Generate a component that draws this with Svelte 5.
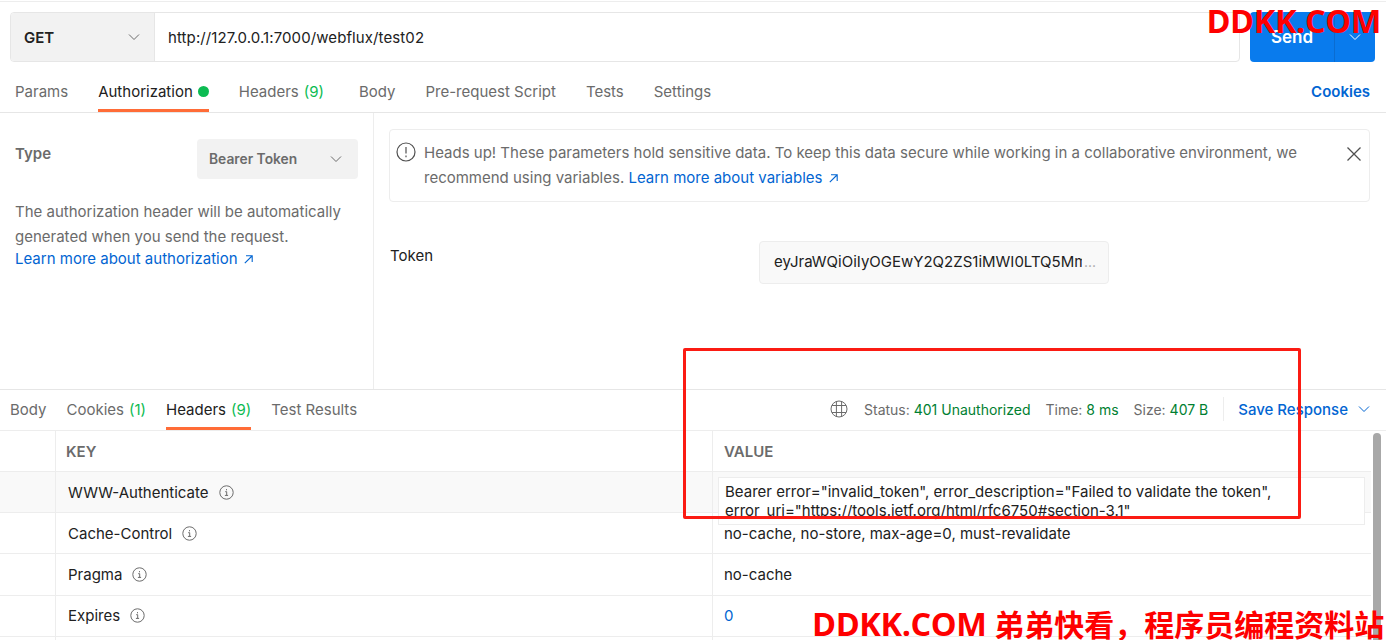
<script>
	const requestTabs = [
		{ label: 'Params' },
		{ label: 'Authorization', active: true, dot: true },
		{ label: 'Headers', count: '(9)', wide: true },
		{ label: 'Body' },
		{ label: 'Pre-request Script' },
		{ label: 'Tests' },
		{ label: 'Settings' }
	];

	const responseTabs = [
		{ label: 'Body' },
		{ label: 'Cookies', count: '(1)' },
		{ label: 'Headers', count: '(9)', active: true },
		{ label: 'Test Results' }
	];

	const headers = [
		{ key: 'WWW-Authenticate', value: '', hovered: true },
		{ key: 'Cache-Control', value: 'no-cache, no-store, max-age=0, must-revalidate' },
		{ key: 'Pragma', value: 'no-cache' },
		{ key: 'Expires', value: '0', link: true },
		{ key: '', value: '' }
	];
</script>

<div class="app">
	<div class="top-rule"></div>
	<div class="request-bar">
		<div class="url-group">
			<div class="method">
				<span>GET</span>
				<svg width="12" height="12" viewBox="0 0 12 12"><path d="M1 3.5 6 8.5 11 3.5" /></svg>
			</div>
			<div class="url">http://127.0.0.1:7000/webflux/test02</div>
		</div>
		<div class="send">
			<span class="send-label">Send</span>
			<span class="send-arrow">
				<svg width="12" height="12" viewBox="0 0 12 12"><path d="M1 3.5 6 8.5 11 3.5" /></svg>
			</span>
		</div>
	</div>

	<nav class="req-tabs">
		{#each requestTabs as tab}
			<div class="req-tab" class:active={tab.active} class:wide={tab.wide}>
				<span>{tab.label}</span>
				{#if tab.count}<span class="count">{tab.count}</span>{/if}
				{#if tab.dot}<i class="dot"></i>{/if}
			</div>
		{/each}
		<div class="cookies-link">Cookies</div>
	</nav>

	<section class="auth">
		<aside class="auth-side">
			<div class="type-row">
				<span class="type-label">Type</span>
				<div class="type-select">
					<span>Bearer Token</span>
					<svg width="12" height="12" viewBox="0 0 12 12"><path d="M1 3.5 6 8.5 11 3.5" /></svg>
				</div>
			</div>
			<p class="auth-help">The authorization header will be automatically generated when you send the request.</p>
			<div class="learn">Learn more about authorization <svg class="arrow" width="9" height="9" viewBox="0 0 9 9"><path d="M0.8 8.2 8 1M2 0.8H8.2V7" /></svg></div>
		</aside>
		<div class="auth-main">
			<div class="alert">
				<svg class="alert-icon" width="20" height="20" viewBox="0 0 20 20">
					<circle cx="10" cy="10" r="9" />
					<path d="M10 5v6.4M10 13.6v1.6" />
				</svg>
				<p>Heads up! These parameters hold sensitive data. To keep this data secure while working in a collaborative environment, we recommend using variables. <span class="blue">Learn more about variables <svg class="arrow" width="9" height="9" viewBox="0 0 9 9"><path d="M0.8 8.2 8 1M2 0.8H8.2V7" /></svg></span></p>
				<svg class="alert-close" width="14" height="14" viewBox="0 0 14 14"><path d="M0.5 0.5 13.5 13.5M13.5 0.5 0.5 13.5" /></svg>
			</div>
			<div class="token-row">
				<span class="token-label">Token</span>
				<div class="token-input"><span>eyJraWQiOiIyOGEwY2Q2ZS1iMWI0LTQ5Mm</span><em>...</em></div>
			</div>
		</div>
	</section>

	<section class="response">
		<div class="res-bar">
			<div class="res-tabs">
				{#each responseTabs as tab}
					<div class="res-tab" class:active={tab.active}>
						<span>{tab.label}</span>
						{#if tab.count}<span class="count">{tab.count}</span>{/if}
					</div>
				{/each}
			</div>
			<div class="res-meta">
				<svg class="globe" width="18" height="18" viewBox="0 0 18 18">
					<circle cx="9" cy="9" r="8" />
					<path d="M2 5.5h14M2 12.5h14M6.4 1.6v14.8M11.6 1.6v14.8" />
				</svg>
				<span class="meta">Status: <b>401 Unauthorized</b></span>
				<span class="meta">Time: <b>8 ms</b></span>
				<span class="meta">Size: <b>407 B</b></span>
				<i class="meta-sep"></i>
				<span class="save">Save Response</span>
				<svg class="save-chevron" width="12" height="12" viewBox="0 0 12 12"><path d="M1 3.5 6 8.5 11 3.5" /></svg>
			</div>
		</div>

		<div class="table">
			<div class="row head">
				<div class="cell gutter"></div>
				<div class="cell key">KEY</div>
				<div class="cell value">VALUE</div>
			</div>
			{#each headers as row}
				<div class="row" class:hovered={row.hovered}>
					<div class="cell gutter"></div>
					<div class="cell key">
						{row.key}
						{#if row.key}
							<svg class="info" width="15" height="15" viewBox="0 0 15 15">
								<circle cx="7.5" cy="7.5" r="6.7" />
								<path d="M6.2 6.7h1.5v3.6M5.9 10.4h3.2M7.5 4.1v1.2" />
							</svg>
						{/if}
					</div>
					<div class="cell value" class:num={row.link}>{row.value}</div>
				</div>
			{/each}
			<div class="expanded">Bearer error="invalid_token", error_description="Failed to validate the token", error_uri="https://tools.ietf.org/html/rfc6750#section-3.1"</div>
		</div>
		<div class="scrollbar"></div>
	</section>

	<div class="highlight"></div>
	<div class="mark mark-top"><span class="latin">DDKK.COM</span></div>
	<div class="mark mark-bottom"><span class="latin">DDKK.COM</span> 弟弟快看，程序员编程资料站</div>
</div>

<style>
	:global(body) {
		margin: 0;
		background: #fff;
	}

	.app {
		position: relative;
		width: 1386px;
		height: 640px;
		overflow: hidden;
		box-sizing: border-box;
		color: #212121;
		background: #fff;
		font-family: Inter, "Noto Sans", sans-serif;
		font-size: 15px;
	}

	svg path,
	svg circle {
		fill: none;
		stroke: currentColor;
	}

	.top-rule {
		height: 1px;
		margin-top: 1px;
		background: #ededed;
	}

	.request-bar {
		display: flex;
		height: 50px;
		padding: 10px 11px 0 10px;
		gap: 10px;
	}

	.url-group {
		display: flex;
		flex: 1;
		overflow: hidden;
		border: 1px solid #e6e6e6;
		border-radius: 4px;
	}

	.method {
		display: flex;
		box-sizing: border-box;
		width: 144px;
		padding: 0 14px 0 13px;
		align-items: center;
		justify-content: space-between;
		color: #212121;
		background: #f2f2f2;
		border-right: 1px solid #e6e6e6;
		font-weight: 600;
	}

	.method svg {
		color: #6b6b6b;
	}

	.url {
		display: flex;
		padding-left: 13px;
		align-items: center;
		color: #212121;
		letter-spacing: 0.1px;
	}

	.send {
		display: flex;
		width: 125px;
		overflow: hidden;
		color: #fff;
		background: #097bed;
		border-radius: 4px;
		font-size: 17px;
		font-weight: 600;
	}

	.send-label {
		display: flex;
		width: 84px;
		align-items: center;
		justify-content: center;
		border-right: 1px solid #0a6cd0;
	}

	.send-arrow {
		display: flex;
		flex: 1;
		align-items: center;
		justify-content: center;
	}

	.req-tabs {
		display: flex;
		height: 50px;
		padding: 0 16px 0 15px;
		align-items: stretch;
		border-bottom: 1px solid #e6e6e6;
		box-sizing: content-box;
		gap: 30px;
	}

	.req-tab {
		position: relative;
		display: flex;
		padding-top: 8px;
		gap: 5px;
		align-items: center;
		color: #6b6b6b;
	}

	.req-tab.wide {
		margin-right: 5px;
	}

	.req-tab.active {
		color: #212121;
	}

	.req-tab.active::after,
	.res-tab.active::after {
		position: absolute;
		right: 0;
		bottom: 0;
		left: 0;
		height: 3px;
		background: #ff6c37;
		content: "";
	}

	.count {
		color: #0cbb52;
	}

	.dot {
		width: 11px;
		height: 11px;
		background: #0cbb52;
		border-radius: 50%;
	}

	.cookies-link {
		display: flex;
		margin-left: auto;
		padding-top: 8px;
		align-items: center;
		color: #0265d2;
		font-weight: 600;
	}

	.auth {
		display: flex;
		height: 276px;
	}

	.auth-side {
		box-sizing: border-box;
		width: 374px;
		padding: 26px 15px 0;
		border-right: 1px solid #ededed;
		color: #6b6b6b;
	}

	.type-row {
		display: flex;
		justify-content: space-between;
		align-items: flex-start;
	}

	.type-label {
		margin-top: 5px;
		font-weight: 600;
	}

	.type-select {
		display: flex;
		box-sizing: border-box;
		width: 161px;
		height: 40px;
		padding: 0 16px 1px 12px;
		align-items: center;
		justify-content: space-between;
		background: #f2f2f2;
		border-radius: 4px;
		font-size: 13.8px;
		font-weight: 600;
	}

	.auth-help {
		margin: 20px 0 0;
		line-height: 25px;
	}

	.learn {
		margin-top: -1px;
		line-height: 22px;
		color: #0265d2;
	}

	.arrow {
		margin-left: 2px;
		vertical-align: 0;
		stroke-width: 1.1;
	}

	.auth-main {
		flex: 1;
		padding: 16px 16px 0 15px;
	}

	.alert {
		display: flex;
		box-sizing: border-box;
		height: 73px;
		padding: 10px 8px 0 6px;
		align-items: flex-start;
		border: 1px solid #ededed;
		border-radius: 4px;
		color: #6b6b6b;
	}

	.alert-icon {
		flex: none;
		margin-top: 2px;
		margin-right: 8px;
		stroke-width: 1.2;
		color: #505050;
	}

	.alert p {
		flex: 1;
		margin: 0;
		line-height: 25px;
		padding-right: 30px;
	}

	.alert-close {
		flex: none;
		margin-top: 7px;
		color: #505050;
		stroke-width: 1.3;
	}

	.blue,
	.save {
		color: #0265d2;
	}

	.token-row {
		display: flex;
		margin-top: 39px;
		padding-left: 1px;
		align-items: flex-start;
	}

	.token-label {
		width: 369px;
		margin-top: 5px;
	}

	.token-input {
		display: flex;
		box-sizing: border-box;
		width: 350px;
		height: 43px;
		padding: 0 14px 3px;
		align-items: center;
		background: #f9f9f9;
		border: 1px solid #ededed;
		border-radius: 4px;
	}

	.token-input span {
		flex: none;
		width: 308px;
		overflow: hidden;
		white-space: nowrap;
	}

	.token-input em {
		flex: none;
		margin-left: 2px;
		color: #a6a6a6;
		font-size: 14px;
		font-style: normal;
	}

	.response {
		position: relative;
		border-top: 1px solid #e6e6e6;
	}

	.res-bar {
		display: flex;
		box-sizing: content-box;
		height: 40px;
		padding: 0 16px 0 10px;
		justify-content: space-between;
		border-bottom: 1px solid #ededed;
	}

	.res-tabs {
		display: flex;
		gap: 20px;
	}

	.res-tab {
		position: relative;
		display: flex;
		padding-bottom: 2px;
		gap: 5px;
		align-items: center;
		color: #6b6b6b;
	}

	.res-tab.active {
		color: #212121;
	}

	.res-meta {
		display: flex;
		padding-bottom: 2px;
		align-items: center;
		font-size: 14px;
		color: #6b6b6b;
	}

	.globe {
		margin-right: 16px;
		color: #6b6b6b;
		stroke-width: 1;
	}

	.meta {
		margin-right: 15px;
	}

	.meta b {
		color: #007f31;
		font-weight: 400;
	}

	.meta-sep {
		width: 1px;
		height: 24px;
		margin: 0 14px 0 0;
		background: #ededed;
	}

	.save {
		font-size: 15px;
		font-weight: 500;
	}

	.save-chevron {
		margin-left: 10px;
		color: #0265d2;
	}

	.table {
		position: relative;
		width: 1371px;
	}

	.row {
		display: grid;
		grid-template-columns: 56px 657px 1fr;
		height: 41.2px;
		box-sizing: border-box;
		border-bottom: 1px solid #ededed;
	}

	.row.hovered .cell {
		background: #f9f9f9;
	}

	.row.head {
		height: 41px;
	}

	.row.head .cell {
		color: #6b6b6b;
		font-weight: 600;
	}

	.row.head .cell.key {
		padding-left: 10px;
	}

	.cell {
		display: flex;
		min-width: 0;
		box-sizing: border-box;
		padding: 0 10px;
		align-items: center;
		border-right: 1px solid #ededed;
	}

	.cell.key {
		padding-left: 12px;
	}

	.cell.value {
		border-right: 0;
		padding-left: 11px;
	}

	.cell.num {
		color: #0265d2;
	}

	.info {
		margin-left: 10px;
		color: #6b6b6b;
		stroke-width: 1;
	}

	.expanded {
		position: absolute;
		top: 46px;
		left: 718px;
		box-sizing: border-box;
		width: 647px;
		height: 48px;
		padding: 4px 6px;
		overflow: hidden;
		background: #fff;
		border: 1px solid #ededed;
		line-height: 19px;
	}

	.scrollbar {
		position: absolute;
		top: 43px;
		right: 5px;
		width: 8px;
		height: 260px;
		background: #a8a8a8;
		border-radius: 4px;
	}

	.highlight {
		position: absolute;
		top: 348px;
		left: 683px;
		box-sizing: border-box;
		width: 618px;
		height: 171px;
		border: 3px solid #fb1b13;
		border-radius: 2px;
	}

	.mark {
		position: absolute;
		color: #fe0000;
		font-family: "Open Sans", "Noto Sans CJK SC", sans-serif;
		font-size: 30px;
		font-weight: 700;
		line-height: 38px;
		white-space: nowrap;
	}

	.latin {
		font-size: 32.5px;
		letter-spacing: -0.4px;
	}

	.mark-top {
		top: 2px;
		right: 5px;
	}

	.mark-bottom {
		top: 605px;
		left: 812px;
	}
</style>
